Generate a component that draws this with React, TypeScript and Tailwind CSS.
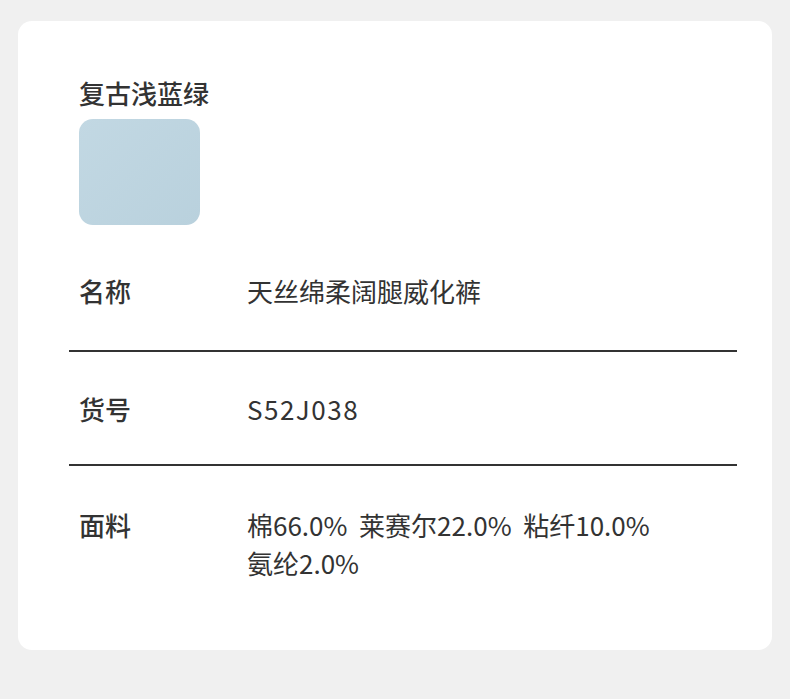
import React from "react";

const font = { fontFamily: '"Noto Sans CJK SC", "Noto Sans", sans-serif' };

const rows = [
  { label: "名称", value: ["天丝绵柔阔腿威化裤"] },
  { label: "货号", value: ["S52J038"] },
  { label: "面料", value: ["棉66.0%  莱赛尔22.0%  粘纤10.0%", "氨纶2.0%"] },
];

export default function App() {
  return (
    <div className="w-[790px] h-[699px] bg-[#f0f0f0] pt-[21px] pl-[18px]" style={font}>
      <div className="w-[754px] h-[629px] bg-white rounded-[14px] pt-[53px] pl-[51px] pr-[35px] text-[#333]">
        <div className="pl-[10px]">
          <div className="text-[26px] leading-[38px] font-medium">复古浅蓝绿</div>
          <div className="mt-[7px] w-[121px] h-[106px] rounded-[14px] bg-[#bdd4e0] bg-[linear-gradient(135deg,#c2d8e3,#b9d1dd)]" />
        </div>
        <div className="mt-[47px]">
          {rows.map((r, idx) => (
            <div
              key={idx}
              className={`flex pl-[10px] text-[26px] leading-[38px] ${idx === 0 ? "pb-[40px]" : idx === 1 ? "pt-[38px] pb-[36px]" : "pt-[40px]"} ${idx < rows.length - 1 ? "border-b-2 border-[#333]" : ""}`}
            >
              <div className="w-[168px] font-medium">{r.label}</div>
              <div className={`whitespace-pre ${idx === 1 ? "tracking-[1.5px]" : ""}`}>
                {r.value.map((v, i) => (
                  <div key={i}>{v}</div>
                ))}
              </div>
            </div>
          ))}
        </div>
      </div>
    </div>
  );
}
